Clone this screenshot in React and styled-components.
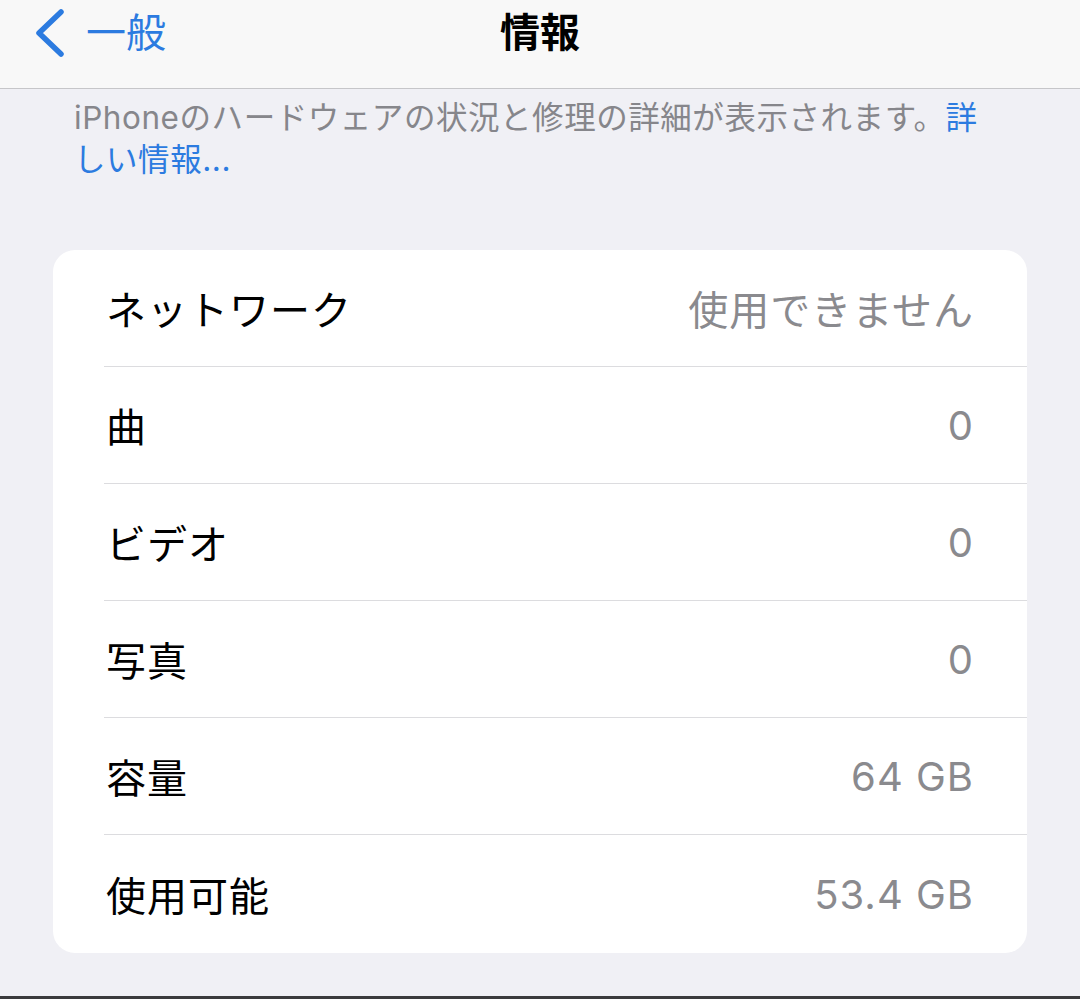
import React from 'react';
import styled, { createGlobalStyle } from 'styled-components';

const GlobalStyle = createGlobalStyle`
  body {
    margin: 0;
    background: #f0f0f5;
    font-family: Inter, "Noto Sans CJK JP", sans-serif;
  }
`;

const Page = styled.div`
  width: 1080px;
  height: 999px;
  display: flex;
  flex-direction: column;
  overflow: hidden;
  background: #f0f0f5;
`;

const NavBar = styled.div`
  height: 89px;
  box-sizing: border-box;
  padding-bottom: 23px;
  background: #f8f8f8;
  border-bottom: 1px solid #c6c6c9;
  display: grid;
  grid-template-columns: 1fr auto 1fr;
  align-items: center;
`;

const BackButton = styled.div`
  display: flex;
  align-items: center;
  gap: 21px;
  padding-left: 35px;
  color: #2c7be0;
  font-size: 40px;
  line-height: 1;
`;

const Title = styled.div`
  font-size: 40px;
  font-weight: 700;
  color: #000;
  line-height: 1;
`;

const Content = styled.div`
  flex: 1;
  padding: 0 53px;
`;

const Note = styled.p`
  margin: 8px 0 0;
  padding-left: 21px;
  padding-right: 30px;
  font-size: 31.5px;
  line-height: 42px;
  letter-spacing: 0.55px;
  color: #86868b;
`;

const Link = styled.span`
  color: #2c7be0;
`;

const Card = styled.div`
  margin-top: 69px;
  background: #fff;
  border-radius: 22px;
  overflow: hidden;
`;

const Row = styled.div`
  height: ${({ last }) => (last ? 118 : 117)}px;
  margin-left: 51px;
  padding-left: 2px;
  padding-right: 53px;
  box-sizing: border-box;
  display: flex;
  align-items: center;
  justify-content: space-between;
  border-bottom: ${({ last }) => (last ? 'none' : '1.5px solid #dcdcdf')};
  font-size: 40px;
  letter-spacing: 1px;
`;

const Label = styled.span`
  color: #000;
`;

const Value = styled.span`
  color: #8a8a8e;
`;

const HomeBar = styled.div`
  height: 3px;
  background: #3a3a3d;
`;

const rows = [
  ['ネットワーク', '使用できません'],
  ['曲', '0'],
  ['ビデオ', '0'],
  ['写真', '0'],
  ['容量', '64 GB'],
  ['使用可能', '53.4 GB'],
];

const Chevron = () => (
  <svg width="30" height="50" viewBox="0 0 30 50">
    <path d="M26 4 L4 25 L26 46" fill="none" stroke="#2c7be0" strokeWidth="5.5" strokeLinecap="round" strokeLinejoin="round" />
  </svg>
);

const App = () => (
  <Page>
    <GlobalStyle />
    <NavBar>
      <BackButton>
        <Chevron />
        <span>一般</span>
      </BackButton>
      <Title>情報</Title>
      <div />
    </NavBar>
    <Content>
      <Note>
        iPhoneのハードウェアの状況と修理の詳細が表示されます。<Link>詳しい情報...</Link>
      </Note>
      <Card>
        {rows.map(([label, value], i) => (
          <Row key={label} last={i === rows.length - 1}>
            <Label>{label}</Label>
            <Value>{value}</Value>
          </Row>
        ))}
      </Card>
    </Content>
    <HomeBar />
  </Page>
);

export default App;
